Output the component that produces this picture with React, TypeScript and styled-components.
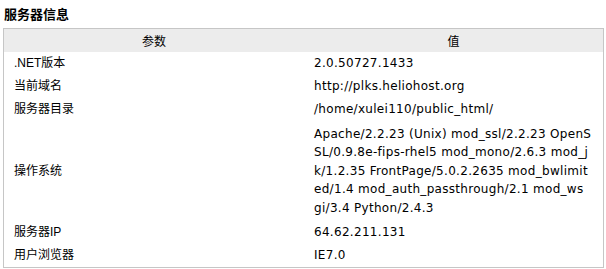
import React from "react";
import styled, { createGlobalStyle } from "styled-components";

const Global = createGlobalStyle`
  html, body { margin: 0; padding: 0; background: #ffffff; }
  body {
    font-family: "DejaVu Sans", Verdana, "Noto Sans CJK SC", sans-serif;
    font-size: 12px;
    color: #000000;
  }
`;

const Page = styled.div`
  width: 606px;
  padding: 0 3px;
  box-sizing: border-box;
`;

const Title = styled.h3`
  margin: 0;
  padding: 4px 1px 4px;
  height: 28px;
  box-sizing: border-box;
  font-family: "Noto Sans CJK SC", sans-serif;
  font-size: 13px;
  font-weight: 700;
  line-height: 20px;
`;

const Table = styled.table`
  width: 601px;
  border: 1px solid #c6c6c6;
  border-collapse: collapse;
  table-layout: fixed;
`;

const HeadCell = styled.th`
  background: #ececec;
  height: 23px;
  padding: 0;
  font-family: "Noto Sans CJK SC", sans-serif;
  font-weight: 400;
  font-size: 12px;
  line-height: 23px;
  text-align: center;
`;

const LabelCell = styled.td<{ $multi?: boolean }>`
  padding: ${(p) => (p.$multi ? "4px 10px" : "2px 10px")};
  font-family: "Liberation Sans", "Noto Sans CJK SC", sans-serif;
  font-size: 12px;
  line-height: 19px;
  vertical-align: middle;
`;

const ValueCell = styled.td<{ $multi?: boolean }>`
  padding: ${(p) => (p.$multi ? "4px 10px" : "2px 10px")};
  font-family: "DejaVu Sans", Verdana, sans-serif;
  font-size: 12px;
  letter-spacing: 0.3px;
  line-height: ${(p) => (p.$multi ? "18.4px" : "19px")};
  vertical-align: middle;
`;

const Line = styled.span`
  display: block;
  white-space: nowrap;
`;

const rows: { label: string; value: string[] }[] = [
  { label: ".NET版本", value: ["2.0.50727.1433"] },
  { label: "当前域名", value: ["http://plks.heliohost.org"] },
  { label: "服务器目录", value: ["/home/xulei110/public_html/"] },
  {
    label: "操作系统",
    value: [
      "Apache/2.2.23 (Unix) mod_ssl/2.2.23 OpenS",
      "SL/0.9.8e-fips-rhel5 mod_mono/2.6.3 mod_j",
      "k/1.2.35 FrontPage/5.0.2.2635 mod_bwlimit",
      "ed/1.4 mod_auth_passthrough/2.1 mod_ws",
      "gi/3.4 Python/2.4.3",
    ],
  },
  { label: "服务器IP", value: ["64.62.211.131"] },
  { label: "用户浏览器", value: ["IE7.0"] },
];

export default function App() {
  return (
    <Page>
      <Global />
      <Title>服务器信息</Title>
      <Table>
        <colgroup>
          <col style={{ width: 300 }} />
          <col style={{ width: 299 }} />
        </colgroup>
        <thead>
          <tr>
            <HeadCell>参数</HeadCell>
            <HeadCell>值</HeadCell>
          </tr>
        </thead>
        <tbody>
          {rows.map((r) => {
            const multi = r.value.length > 1;
            return (
              <tr key={r.label}>
                <LabelCell $multi={multi}>{r.label}</LabelCell>
                <ValueCell $multi={multi}>
                  {r.value.map((line) => (
                    <Line key={line}>{line}</Line>
                  ))}
                </ValueCell>
              </tr>
            );
          })}
        </tbody>
      </Table>
    </Page>
  );
}
